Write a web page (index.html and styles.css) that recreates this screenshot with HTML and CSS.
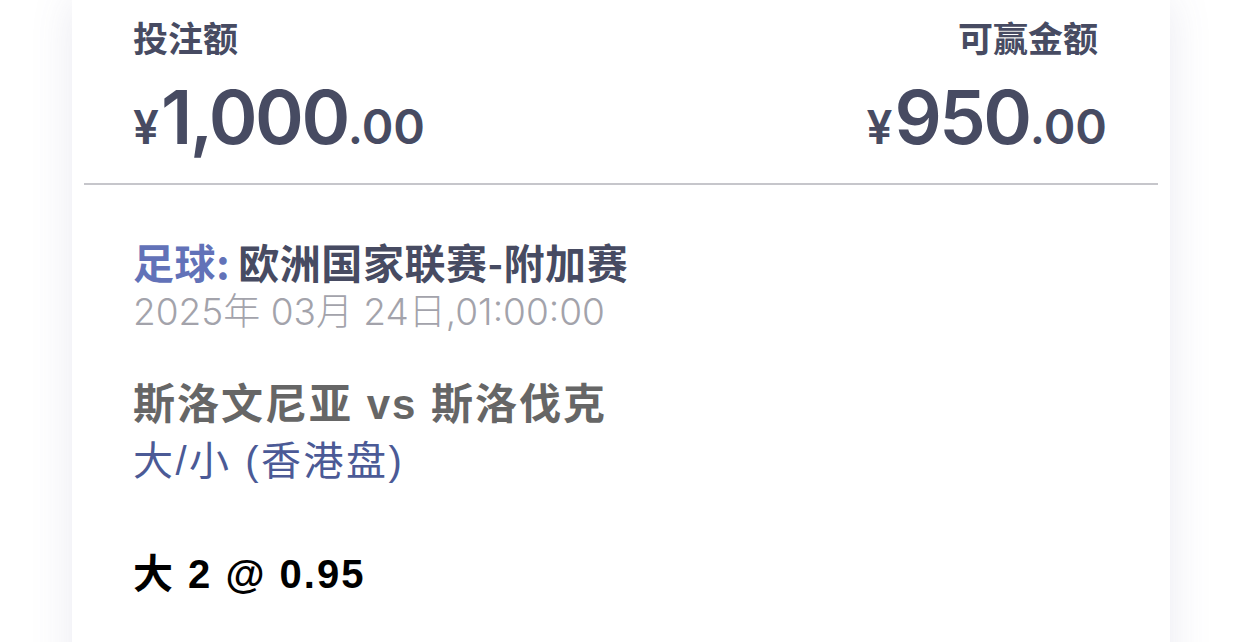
FILE: index.html
```html
<!DOCTYPE html>
<html lang="zh-CN">
<head>
<meta charset="UTF-8">
<meta name="viewport" content="width=device-width, initial-scale=1.0">
<title>注单详情</title>
<link rel="stylesheet" href="styles.css">
</head>
<body>
  <div class="page">
    <div class="card">
      <div class="amounts">
        <div class="amount-col">
          <div class="amount-label">投注额</div>
          <div class="amount"><span class="cur">¥</span><span class="int">1,000</span><span class="dec">.00</span></div>
        </div>
        <div class="amount-col right">
          <div class="amount-label">可赢金额</div>
          <div class="amount"><span class="cur">¥</span><span class="int">950</span><span class="dec">.00</span></div>
        </div>
      </div>

      <hr class="divider">

      <div class="details">
        <div class="league"><span class="sport">足球:</span>欧洲国家联赛-附加赛</div>
        <div class="date">2025年 03月 24日,01:00:00</div>

        <div class="teams">斯洛文尼亚 vs 斯洛伐克</div>
        <div class="market">大/小 (香港盘)</div>

        <div class="pick">大 2 @ 0.95</div>
      </div>
    </div>
  </div>
</body>
</html>
```

FILE: styles.css
```css
html, body {
  margin: 0;
  height: 100%;
  overflow: hidden;
}

body {
  background: #fff;
  font-family: "Liberation Sans", "Noto Sans CJK SC", sans-serif;
}

.page {
  padding: 0 72px;
}

.card {
  background: #fff;
  min-height: 800px;
  box-shadow: 0 0 40px rgba(90, 95, 150, 0.13);
  padding: 0 12px;
}

.amounts {
  display: flex;
  justify-content: space-between;
  padding: 16px 51px 0 49px;
}

.amount-col.right {
  text-align: right;
}

.amount-label {
  font-family: "Noto Sans CJK SC", sans-serif;
  font-size: 35px;
  font-weight: 700;
  color: #474b62;
  line-height: 42px;
}

.amount-col.right .amount-label {
  margin-right: 9px;
}

.amount {
  color: #474b62;
  font-family: Inter, "Noto Sans", sans-serif;
  font-weight: 560;
  line-height: 1;
  margin-top: 22px;
  white-space: nowrap;
}

.amount .cur {
  font-size: 46px;
  margin-right: 2px;
}

.amount .int {
  font-size: 74px;
  letter-spacing: -2.5px;
}

.amount .dec {
  font-size: 48px;
}

.divider {
  border: 0;
  height: 2px;
  background: #c6c6cb;
  margin: 29px 0 0;
}

.details {
  padding: 52px 49px 40px;
}

.league {
  font-family: "Noto Sans CJK SC", sans-serif;
  font-size: 41px;
  font-weight: 700;
  color: #474b62;
  line-height: 48px;
  letter-spacing: 0.6px;
}

.league .sport {
  color: #6272b8;
  margin-right: 8px;
}

.date {
  margin-top: 3px;
  font-family: Inter, "Noto Sans CJK SC", sans-serif;
  font-size: 37px;
  font-weight: 300;
  color: #a3a3ab;
  line-height: 48px;
}

.teams {
  margin-top: 45px;
  font-size: 42px;
  font-weight: 700;
  color: #666;
  line-height: 48px;
  letter-spacing: 2px;
}

.market {
  font-size: 40px;
  color: #4b5a96;
  line-height: 64px;
  letter-spacing: 2.5px;
}

.pick {
  margin-top: 57px;
  font-size: 40px;
  font-weight: 700;
  color: #000;
  line-height: 48px;
  letter-spacing: 2px;
}
```
